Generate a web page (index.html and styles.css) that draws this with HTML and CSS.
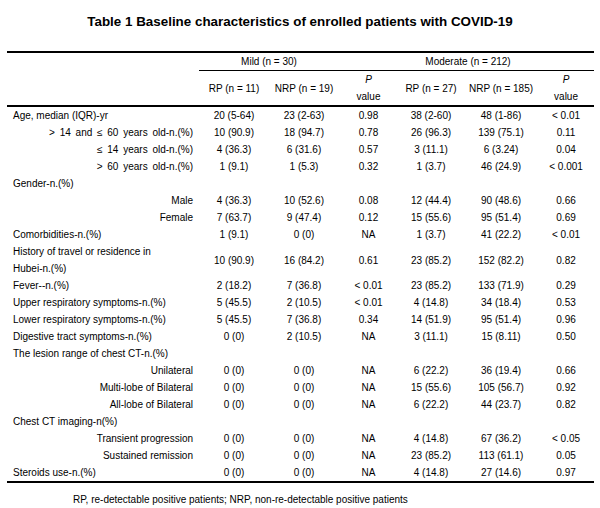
FILE: index.html
```html
<!DOCTYPE html>
<html>
<head>
<meta charset="utf-8">
<link rel="stylesheet" href="styles.css">
</head>
<body>
<h1 class="title">Table 1 Baseline characteristics of enrolled patients with COVID-19</h1>
<table class="tbl">
  <colgroup>
    <col class="c-label">
    <col class="c-a">
    <col class="c-b">
    <col class="c-p1">
    <col class="c-d">
    <col class="c-e">
    <col class="c-p2">
  </colgroup>
  <thead>
    <tr class="hrow1">
      <th class="blank"></th>
      <th colspan="2" class="grp">Mild (n = 30)</th>
      <th class="grp"></th>
      <th colspan="2" class="grp">Moderate (n = 212)</th>
      <th class="grp"></th>
    </tr>
    <tr class="hrow2">
      <th class="blank"></th>
      <th>RP (n = 11)</th>
      <th>NRP (n = 19)</th>
      <th><i>P</i><br>value</th>
      <th>RP (n = 27)</th>
      <th>NRP (n = 185)</th>
      <th><i>P</i><br>value</th>
    </tr>
  </thead>
  <tbody>
    <tr><td class="lbl">Age, median (IQR)-yr</td><td>20 (5-64)</td><td>23 (2-63)</td><td>0.98</td><td>38 (2-60)</td><td>48 (1-86)</td><td>&lt; 0.01</td></tr>
    <tr><td class="sub ws">&gt; 14 and ≤ 60 years old-n.(%)</td><td>10 (90.9)</td><td>18 (94.7)</td><td>0.78</td><td>26 (96.3)</td><td>139 (75.1)</td><td>0.11</td></tr>
    <tr><td class="sub ws">≤ 14 years old-n.(%)</td><td>4 (36.3)</td><td>6 (31.6)</td><td>0.57</td><td>3 (11.1)</td><td>6 (3.24)</td><td>0.04</td></tr>
    <tr><td class="sub ws">&gt; 60 years old-n.(%)</td><td>1 (9.1)</td><td>1 (5.3)</td><td>0.32</td><td>1 (3.7)</td><td>46 (24.9)</td><td>&lt; 0.001</td></tr>
    <tr><td class="lbl">Gender-n.(%)</td><td></td><td></td><td></td><td></td><td></td><td></td></tr>
    <tr><td class="sub">Male</td><td>4 (36.3)</td><td>10 (52.6)</td><td>0.08</td><td>12 (44.4)</td><td>90 (48.6)</td><td>0.66</td></tr>
    <tr><td class="sub">Female</td><td>7 (63.7)</td><td>9 (47.4)</td><td>0.12</td><td>15 (55.6)</td><td>95 (51.4)</td><td>0.69</td></tr>
    <tr><td class="lbl">Comorbidities-n.(%)</td><td>1 (9.1)</td><td>0 (0)</td><td>NA</td><td>1 (3.7)</td><td>41 (22.2)</td><td>&lt; 0.01</td></tr>
    <tr><td class="lbl">History of travel or residence in<br>Hubei-n.(%)</td><td>10 (90.9)</td><td>16 (84.2)</td><td>0.61</td><td>23 (85.2)</td><td>152 (82.2)</td><td>0.82</td></tr>
    <tr><td class="lbl">Fever--n.(%)</td><td>2 (18.2)</td><td>7 (36.8)</td><td>&lt; 0.01</td><td>23 (85.2)</td><td>133 (71.9)</td><td>0.29</td></tr>
    <tr><td class="lbl">Upper respiratory symptoms-n.(%)</td><td>5 (45.5)</td><td>2 (10.5)</td><td>&lt; 0.01</td><td>4 (14.8)</td><td>34 (18.4)</td><td>0.53</td></tr>
    <tr><td class="lbl">Lower respiratory symptoms-n.(%)</td><td>5 (45.5)</td><td>7 (36.8)</td><td>0.34</td><td>14 (51.9)</td><td>95 (51.4)</td><td>0.96</td></tr>
    <tr><td class="lbl">Digestive tract symptoms-n.(%)</td><td>0 (0)</td><td>2 (10.5)</td><td>NA</td><td>3 (11.1)</td><td>15 (8.11)</td><td>0.50</td></tr>
    <tr><td class="lbl">The lesion range of chest CT-n.(%)</td><td></td><td></td><td></td><td></td><td></td><td></td></tr>
    <tr><td class="sub">Unilateral</td><td>0 (0)</td><td>0 (0)</td><td>NA</td><td>6 (22.2)</td><td>36 (19.4)</td><td>0.66</td></tr>
    <tr><td class="sub">Multi-lobe of Bilateral</td><td>0 (0)</td><td>0 (0)</td><td>NA</td><td>15 (55.6)</td><td>105 (56.7)</td><td>0.92</td></tr>
    <tr><td class="sub">All-lobe of Bilateral</td><td>0 (0)</td><td>0 (0)</td><td>NA</td><td>6 (22.2)</td><td>44 (23.7)</td><td>0.82</td></tr>
    <tr><td class="lbl">Chest CT imaging-n(%)</td><td></td><td></td><td></td><td></td><td></td><td></td></tr>
    <tr><td class="sub">Transient progression</td><td>0 (0)</td><td>0 (0)</td><td>NA</td><td>4 (14.8)</td><td>67 (36.2)</td><td>&lt; 0.05</td></tr>
    <tr><td class="sub">Sustained remission</td><td>0 (0)</td><td>0 (0)</td><td>NA</td><td>23 (85.2)</td><td>113 (61.1)</td><td>0.05</td></tr>
    <tr class="last"><td class="lbl">Steroids use-n.(%)</td><td>0 (0)</td><td>0 (0)</td><td>NA</td><td>4 (14.8)</td><td>27 (14.6)</td><td>0.97</td></tr>
  </tbody>
</table>
<p class="note">RP, re-detectable positive patients; NRP, non-re-detectable positive patients</p>
</body>
</html>
```
FILE: styles.css
```css
html, body {
  margin: 0;
  padding: 0;
  background: #fff;
}
body {
  font-family: "Liberation Sans", Arial, sans-serif;
  color: #000;
  font-size: 10px;
}
.title {
  margin: 13px 0 0 0;
  font-size: 13.4px;
  line-height: 17px;
  font-weight: bold;
  text-align: center;
}
.tbl {
  margin: 21px 0 0 7px;
  width: 587px;
  border-collapse: collapse;
  table-layout: fixed;
  border-top: 2px solid #000;
  border-bottom: 2px solid #000;
}
.c-label { width: 192px; }
.c-a { width: 70px; }
.c-b { width: 70px; }
.c-p1 { width: 59px; }
.c-d { width: 66px; }
.c-e { width: 74px; }
.c-p2 { width: 56px; }
.tbl th,
.tbl td {
  padding: 0;
  line-height: 17px;
  font-weight: normal;
  text-align: center;
  white-space: nowrap;
}
.hrow1 th.grp {
  border-bottom: 1px solid #000;
}
.hrow2 th {
  border-bottom: 2px solid #000;
  vertical-align: middle;
}
.tbl td.lbl {
  text-align: left;
  padding-left: 6px;
}
.tbl td.sub {
  text-align: right;
  padding-right: 6px;
}
.tbl td.ws {
  word-spacing: 2px;
}
.note {
  margin: 10px 0 0 73px;
  font-size: 10px;
  line-height: 14px;
}
```
